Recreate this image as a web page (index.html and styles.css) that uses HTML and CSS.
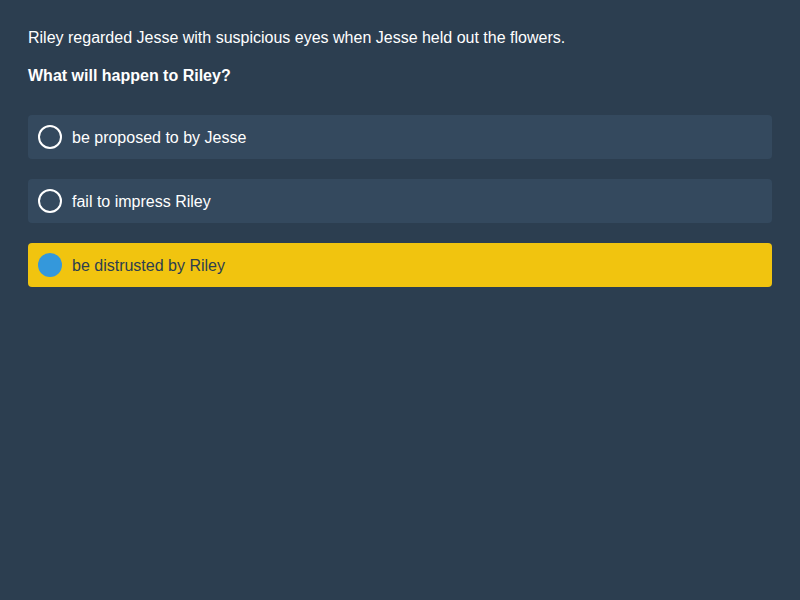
FILE: index.html
```html
<!DOCTYPE html>
<html>
<head>
<meta charset="utf-8">
<link rel="stylesheet" href="styles.css">
</head>
<body>
<div class="page">
  <p class="context">Riley regarded Jesse with suspicious eyes when Jesse held out the flowers.</p>
  <p class="question">What will happen to Riley?</p>
  <div class="options">
    <div class="option"><span class="radio"></span><span class="label">be proposed to by Jesse</span></div>
    <div class="option"><span class="radio"></span><span class="label">fail to impress Riley</span></div>
    <div class="option selected"><span class="radio"></span><span class="label">be distrusted by Riley</span></div>
  </div>
</div>
</body>
</html>
```
FILE: styles.css
```css
html, body {
  margin: 0;
  padding: 0;
  background: #2c3e50;
  width: 800px;
  height: 600px;
}
.page {
  padding: 28px;
  font-family: "Liberation Sans", Arial, sans-serif;
  font-size: 16px;
  color: #ffffff;
}
.context {
  margin: 0;
  line-height: 20px;
}
.question {
  margin: 18px 0 0 0;
  line-height: 20px;
  font-weight: bold;
}
.options {
  margin-top: 29px;
  display: flex;
  flex-direction: column;
  gap: 20px;
}
.option {
  display: flex;
  align-items: center;
  height: 44px;
  box-sizing: border-box;
  padding-left: 10px;
  background: #34495e;
  border-radius: 4px;
}
.radio {
  width: 24px;
  height: 24px;
  box-sizing: border-box;
  border: 2px solid #ffffff;
  border-radius: 50%;
  flex: none;
}
.label {
  margin-left: 10px;
  padding-top: 2px;
}
.option.selected {
  background: #f1c40f;
  color: #2c3e50;
}
.option.selected .radio {
  border: none;
  background: #3498db;
}
```
